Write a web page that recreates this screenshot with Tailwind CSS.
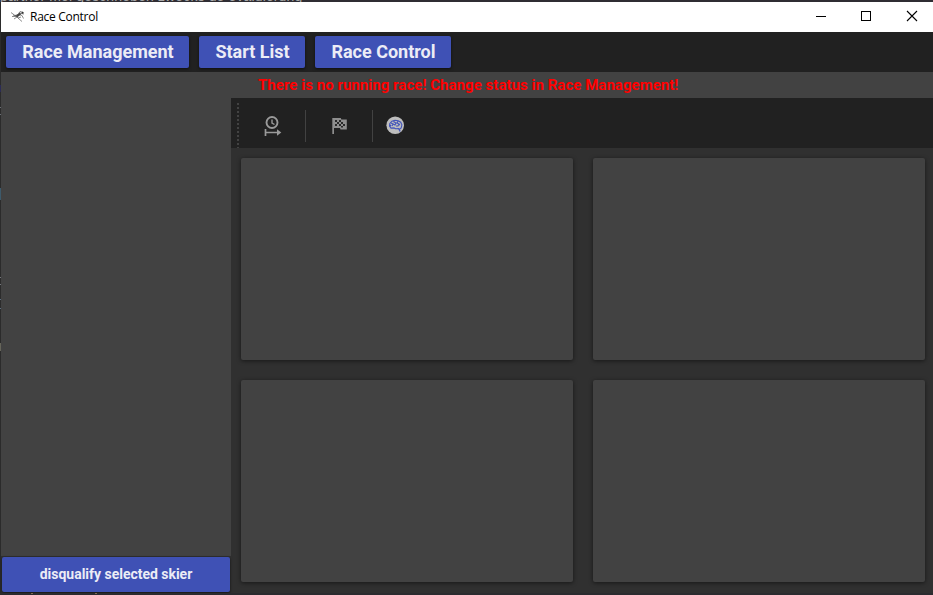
<!DOCTYPE html>
<html lang="en">
<head>
<meta charset="utf-8">
<title>Race Control</title>
<script src="https://cdn.jsdelivr.net/npm/@tailwindcss/browser@4"></script>
</head>
<body class="w-[933px] h-[595px] overflow-hidden bg-[#2b2b2b] font-['Roboto',sans-serif] relative flex flex-col">
  <!-- desktop content behind the window -->
  <div class="h-[2px] shrink-0 overflow-hidden bg-[#2f2d33] flex items-end">
    <span class="block h-[16px] shrink-0 whitespace-nowrap text-[14px] leading-[21px] tracking-[0.13px] text-[#a9a9a9] font-['Liberation_Sans',sans-serif]">partner mei geschrieben zwecks de evaluierung</span>
  </div>
  <div class="absolute left-0 top-[85px] w-px h-[7px] bg-[#2b2b55]"></div>
  <div class="absolute left-0 top-[107px] w-px h-2 border-y border-[#6b6f75]"></div>
  <div class="absolute left-0 top-[188px] w-px h-3 bg-[#3d5a6b]"></div>
  <div class="absolute left-0 top-[277px] w-px h-2 border-y border-[#75777c]"></div>
  <div class="absolute left-0 top-[299px] w-px h-2.5 border-y border-[#5d6f80]"></div>
  <div class="absolute left-0 top-[343px] w-px h-2 bg-[#66655a]"></div>

  <main class="ml-px h-[591px] shrink-0 bg-[#303030] flex flex-col">
    <header class="h-[30px] shrink-0 bg-white flex items-center">
      <svg class="ml-[9px] w-4 h-4 shrink-0" viewBox="0 0 16 16" fill="none" stroke="#555" stroke-width=".9">
        <path d="M1 3.500l4 3 3-1 2-3 3.500 1M2 7.500h4l3-2 3 1 1.500 3M5 6l3 3 3-1M7 8l-3 2M8 9l4 3.500M9 4l5 1M3 6l3 1" opacity=".75"/>
        <path d="M6 6.500l4-3 1 2-4 3z" fill="#444" stroke="none"/><circle cx="12.500" cy="3.700" r="1" fill="#333" stroke="none"/>
      </svg>
      <h1 class="ml-1 grow text-[12px] leading-4 tracking-[-0.28px] text-black font-['Open_Sans',sans-serif]">Race Control</h1>
      <svg class="w-[112px] h-[30px] mr-[6px] shrink-0" viewBox="0 0 112 30" fill="none" stroke="#000">
        <path d="M1 14.500h10M46.500 9.500h9v9h-9z" shape-rendering="crispEdges"/><path d="M92 9l10 10M102 9l-10 10" stroke-width="1.1"/>
      </svg>
    </header>
    <nav class="h-10 shrink-0 bg-[#212121] flex pl-[5px] pt-1 gap-2.5 text-[18px] leading-8 font-bold text-[#ececf6]">
      <button class="w-[183px] h-8 rounded-[2px] bg-[#3f51b5] pl-px shadow-[0_1px_3px_#0009]">Race Management</button>
      <button class="w-[106px] h-8 rounded-[2px] bg-[#3f51b5] pl-px shadow-[0_1px_3px_#0009]">Start List</button>
      <button class="w-[136px] h-8 rounded-[2px] bg-[#3f51b5] pl-px shadow-[0_1px_3px_#0009]">Race Control</button>
    </nav>
    <div class="flex grow min-h-0">
      <aside class="w-[230px] shrink-0 flex flex-col">
        <div class="h-[484px] bg-[#424242]"></div>
        <button class="mt-px mx-px h-[35px] rounded-[2px] bg-[#3f51b5] text-[14px] leading-[35px] font-bold tracking-[-0.02px] text-[#ececf6] shadow-[0_1px_3px_#0009]">disqualify selected skier</button>
      </aside>
      <section class="grow flex flex-col">
        <p class="h-[26px] shrink-0 bg-[#424242] pl-[27px] text-[15px] leading-[26px] font-bold tracking-[0.035px] text-[#ff0000] whitespace-nowrap">There is no running race! Change status in Race Management!</p>
        <div class="h-[50px] shrink-0 bg-[#212121] flex items-start">
          <div class="ml-1.5 mt-[5px] w-[2px] h-[45px] bg-[repeating-linear-gradient(to_bottom,#424242_0_2px,transparent_2px_4px)]"></div>
          <svg class="ml-[25px] mt-[17px] w-[18px] h-[23px]" viewBox="0 0 18 23" fill="none" stroke="#9a9a9a">
            <circle cx="8" cy="7.500" r="5.500" stroke-width="1.9"/><path d="M8 4.500v3.500l2.500 1.500" stroke-width="1.400"/><path d="M1.500 14v7M1.500 17.500h13" stroke-width="1.7"/><path d="M13 14.300l4.300 3.200-4.300 3.200z" fill="#9a9a9a" stroke="none"/>
          </svg>
          <div class="ml-[23px] mt-3 w-px h-8 bg-[#424242]"></div>
          <svg class="ml-[26px] mt-5 w-4 h-[17px]" viewBox="0 0 16 17">
            <path d="M.3 0h8.500l.5 1.500h5.500v10H8.500L8 10H2v6H.3z" fill="#8e8e8e"/>
            <path d="M3 2h2v2H3zM7 2h2v2H7zM5 4h2v2H5zM9 4h2v2H9zM3 6h2v2H3zM7 6h2v2H7zM11 6h2v2h-2zM9 8h2v1.500H9z" fill="#292929"/>
          </svg>
          <div class="ml-[24px] mt-3 w-px h-8 bg-[#424242]"></div>
          <svg class="ml-[13px] mt-[18px] w-[18px] h-[18px]" viewBox="0 0 18 18" fill="none">
            <circle cx="9.200" cy="9.200" r="8.800" fill="#bdbdbd"/>
            <path d="M14 15.500l-1.500-3-3 .2-1.500-.8-3 .2-1.500-2 .3-2.700 2.200-2.200 3-1 3.200.5 2.500 1.500 1.200 2.700-.7 3-1.600 1.100zM5 7l2 1-1 2M8 4v2l2 1-1 2-2-1M12 5l-1 2 2 1-1 2h-2M14 8.500l-1 .5M4 9l1 1" stroke="#4254bb" stroke-width="1.100"/>
          </svg>
        </div>
        <div class="pt-[10px] pl-[10px] grid grid-cols-[332px_332px] auto-rows-[202px] gap-5">
          <div class="rounded-[2px] bg-[#424242] shadow-[0_1px_4px_#0008]"></div>
          <div class="rounded-[2px] bg-[#424242] shadow-[0_1px_4px_#0008]"></div>
          <div class="rounded-[2px] bg-[#424242] shadow-[0_1px_4px_#0008]"></div>
          <div class="rounded-[2px] bg-[#424242] shadow-[0_1px_4px_#0008]"></div>
        </div>
      </section>
    </div>
  </main>
  <!-- lower desktop edge -->
  <div class="h-[2px] bg-[#2b2b2f] flex"><i class="ml-[31px] w-[2px] h-px bg-[#806b55]"></i><i class="ml-[62px] w-[2px] h-px bg-[#806b55]"></i></div>
</body>
</html>
